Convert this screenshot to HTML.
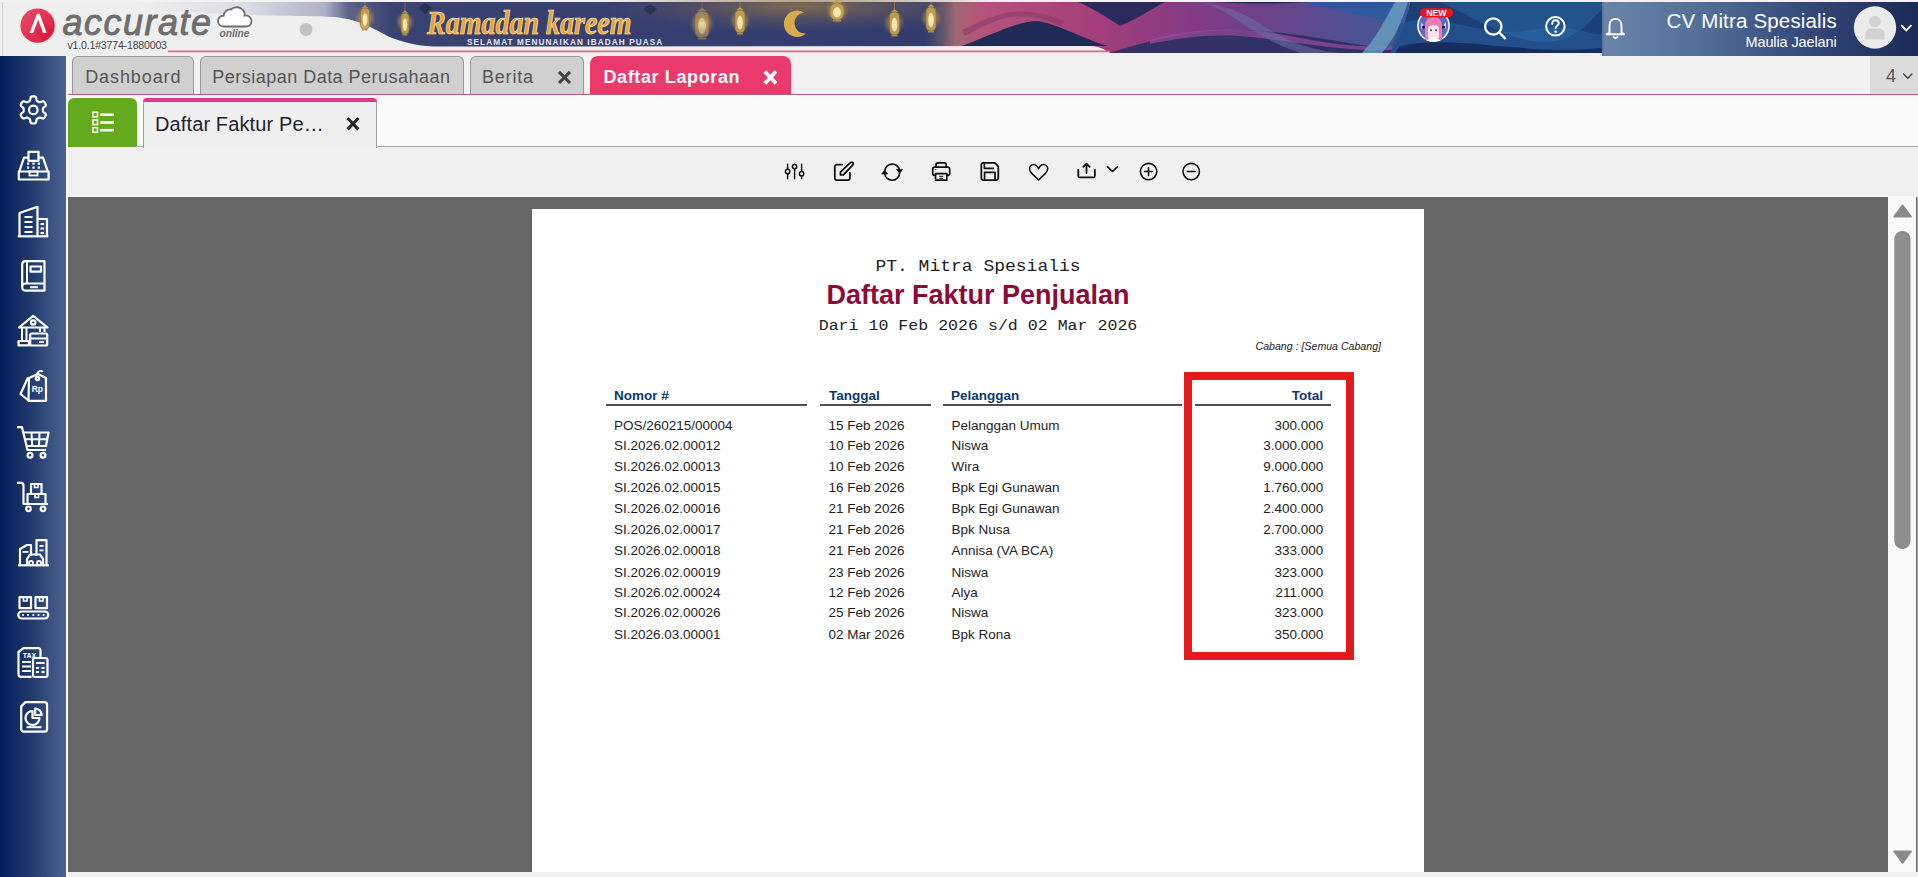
<!DOCTYPE html>
<html><head><meta charset="utf-8">
<style>
*{box-sizing:border-box;margin:0;padding:0}
html,body{width:1918px;height:877px;overflow:hidden;background:#f0f0f0;font-family:"Liberation Sans",sans-serif;position:relative}
.abs{position:absolute}
#hdr{left:0;top:0;width:1918px;height:56px;background:#eeeeee;overflow:hidden}
#side{left:0;top:56px;width:66px;height:821px;background:linear-gradient(90deg,#031e5c 0%,#1c3569 40%,#4b6492 100%)}
#gap{left:66px;top:56px;width:2px;height:821px;background:#fafafa}
#tabbar{left:68px;top:56px;width:1850px;height:38px;background:#f0f0f0}
.tab{position:absolute;top:56px;height:38px;border:1px solid #9a9a9a;border-bottom:none;border-radius:6px 6px 0 0;background:#d0d0d0;color:#555;font-size:19px;white-space:nowrap}
.tab span{position:absolute;top:8px;line-height:22px}
.tab .x{font-weight:bold}
#pinkline{left:68px;top:94px;width:1850px;height:1px;background:#b85a7e}
#panel{left:68px;top:95px;width:1850px;height:52px;background:#fafafa}
#toolbar{left:68px;top:147px;width:1850px;height:50px;background:#f0f0f0}
#viewer{left:68px;top:197px;width:1820px;height:675px;background:#666666}
#scroll{left:1888px;top:197px;width:28px;height:675px;background:#fafafa}
#page{left:532px;top:209px;width:892px;height:663px;background:#ffffff}
.rep{position:absolute;white-space:nowrap;line-height:1}
.row{position:absolute;white-space:nowrap;font-size:13.5px;color:#1e1e1e;line-height:1}
.hd{position:absolute;white-space:nowrap;font-size:13.5px;color:#0b3a6c;font-weight:bold;line-height:1}
.ul{position:absolute;height:2px;background:#505050;top:404px}
.sico{position:absolute;left:15px;width:36px;height:36px}
.tico{position:absolute;top:160px}
</style></head>
<body>
<div id="hdr" class="abs">
<svg width="1918" height="56" viewBox="0 0 1918 56" style="position:absolute;left:0;top:0">
<defs>
<linearGradient id="navy" x1="0" x2="0" y1="0" y2="1">
<stop offset="0" stop-color="#3a3f6a"/>
<stop offset="1" stop-color="#2a3466"/>
</linearGradient>
<linearGradient id="lav" x1="0" x2="1" y1="0" y2="0">
<stop offset="0" stop-color="#efeff1" stop-opacity="0"/>
<stop offset="0.5" stop-color="#d0d1db"/>
<stop offset="1" stop-color="#8e91ab"/>
</linearGradient>
<linearGradient id="goldtop" x1="0" x2="0" y1="0" y2="1">
<stop offset="0" stop-color="#8a6a3a" stop-opacity="0.75"/>
<stop offset="0.6" stop-color="#4a3d5a" stop-opacity="0.3"/>
<stop offset="1" stop-color="#2a3060" stop-opacity="0"/>
</linearGradient>
<linearGradient id="pinkr" x1="0" x2="1" y1="0" y2="1">
<stop offset="0" stop-color="#d05a78"/>
<stop offset="1" stop-color="#9a3a72"/>
</linearGradient>
<linearGradient id="purpr" x1="0" x2="1" y1="0" y2="0">
<stop offset="0" stop-color="#b04a8e"/>
<stop offset="1" stop-color="#5a4a86"/>
</linearGradient>
<linearGradient id="rpan" x1="0" x2="1" y1="0" y2="0">
<stop offset="0" stop-color="#6c86a9"/>
<stop offset="0.35" stop-color="#4f6a94"/>
<stop offset="0.7" stop-color="#2f4574"/>
<stop offset="1" stop-color="#1b2b58"/>
</linearGradient>
<radialGradient id="goldglow"><stop offset="0" stop-color="#9a7a4a" stop-opacity="0.75"/><stop offset="1" stop-color="#6a5a5a" stop-opacity="0"/></radialGradient>
<radialGradient id="glow"><stop offset="0" stop-color="#f0d080" stop-opacity="0.9"/><stop offset="1" stop-color="#c09040" stop-opacity="0"/></radialGradient>
</defs>
<rect x="0" y="0" width="1918" height="2" fill="#f4f2f2"/>
<rect x="0" y="2" width="1918" height="54" fill="#efefef"/>
<rect x="2" y="2" width="1" height="54" fill="#d0d0d0"/>

<linearGradient id="ban" x1="140" x2="1110" y1="0" y2="0" gradientUnits="userSpaceOnUse">
<stop offset="0" stop-color="#efefef"/>
<stop offset="0.11" stop-color="#dcdde5"/>
<stop offset="0.19" stop-color="#b0b2c6"/>
<stop offset="0.215" stop-color="#5e6488"/>
<stop offset="0.26" stop-color="#3a4272"/>
<stop offset="1" stop-color="#2e3a6c"/>
</linearGradient>
<path d="M140 2 L1110 2 L1110 46 L440 46.5 C422 46.5 408 44 392 38 C375 30 362 20 335 17 C300 15 250 18 140 8 Z" fill="url(#ban)"/>
<ellipse cx="800" cy="6" rx="200" ry="26" fill="url(#goldglow)"/>
<linearGradient id="wbase" x1="960" x2="1410" y1="0" y2="0" gradientUnits="userSpaceOnUse">
<stop offset="0" stop-color="#b8577a"/><stop offset="0.3" stop-color="#a43e7a"/><stop offset="0.55" stop-color="#7e3a86"/><stop offset="0.8" stop-color="#5a4a8e"/><stop offset="1" stop-color="#3a5a9a"/></linearGradient>
<path d="M955 2 L1410 2 L1400 53 L1110 53 C1105 50 1100 46 1090 46 L955 46 Z" fill="url(#wbase)"/>
<linearGradient id="blend" x1="0" x2="1" y1="0" y2="0"><stop offset="0" stop-color="#6a5a6a" stop-opacity="0"/><stop offset="0.5" stop-color="#9a6a70"/><stop offset="1" stop-color="#b8577a" stop-opacity="0"/></linearGradient>
<rect x="925" y="2" width="60" height="44" fill="url(#blend)"/>
<path d="M962 46 C985 38 1015 22 1035 21 C1055 22 1080 38 1108 46 Z" fill="#1f2a56"/>
<path d="M962 30 C975 24 990 16 1010 12 C1030 10 1050 14 1065 22 L1060 26 C1045 18 1030 15 1010 17 C995 20 980 28 965 36 Z" fill="#8a3a6a" opacity="0.6"/>
<path d="M1078 2 L1165 2 C1150 10 1135 20 1120 26 C1105 16 1092 8 1078 2 Z" fill="#2a2a5c"/>
<path d="M1110 53 C1150 40 1190 30 1240 30 C1290 30 1340 44 1400 50 L1400 53 Z" fill="#2a2f62" opacity="0.9"/>
<path d="M1150 40 C1190 28 1240 26 1290 36 C1330 44 1360 48 1395 46 L1395 50 C1340 52 1290 40 1240 36 C1200 34 1170 40 1150 44 Z" fill="#9a4a9a" opacity="0.7"/>
<path d="M1200 2 C1230 6 1250 16 1270 30 C1290 42 1310 50 1340 53 L1300 53 C1280 46 1260 36 1240 22 C1225 12 1215 6 1200 2 Z" fill="#6a6aa0" opacity="0.6"/>
<path d="M1300 2 L1400 2 L1400 22 C1370 18 1335 10 1300 2 Z" fill="#2a5a9e" opacity="0.85"/>
<path d="M1215 2 C1250 4 1280 4 1310 2 Z" fill="#1f2a56"/>
<path d="M1395 2 C1385 20 1375 40 1362 53 L1382 53 C1397 35 1402 20 1408 2 Z" fill="#6aa0c0" opacity="0.8"/>
<path d="M1404 2 L1602 2 L1602 53 L1390 53 C1400 40 1405 25 1410 2 Z" fill="#1d3f78"/>
<path d="M1400 24 C1440 8 1480 40 1530 30 C1570 22 1590 36 1602 34 L1602 53 L1390 53 Z" fill="#23528f" opacity="0.85"/>
<path d="M1440 2 C1480 20 1520 50 1560 40 C1580 35 1590 20 1602 10 L1602 2 Z" fill="#2b7ab3" opacity="0.35"/>
<path d="M1400 46 C1460 34 1520 56 1602 48 L1602 53 L1395 53 Z" fill="#172d5c"/>
<g fill="url(#glow)">
<circle cx="365" cy="18" r="11"/><circle cx="405" cy="22" r="10"/>
<circle cx="702" cy="24" r="13"/><circle cx="740" cy="21" r="11"/>
<circle cx="837" cy="11" r="12"/><circle cx="894" cy="23" r="11"/><circle cx="931" cy="18" r="11"/>
</g>
<g opacity="0.9"><path d="M365 2 V5" stroke="#b8954a" stroke-width="0.6"/>
<path d="M361.9 8.0 L365 5.0 L368.1 8.0 Z" fill="#c9a14e"/>
<rect x="360.5" y="8.0" width="9" height="21" rx="4.1" fill="#c9a24e" stroke="#8a6a30" stroke-width="0.7"/>
<ellipse cx="365" cy="19.6" rx="2.5" ry="6.3" fill="#fff0b8"/>
<rect x="362.3" y="29.0" width="5.4" height="1.5" fill="#b8954a"/></g>
<g opacity="0.9"><path d="M405 2 V10" stroke="#b8954a" stroke-width="0.6"/>
<path d="M402.2 13.0 L405 10.0 L407.8 13.0 Z" fill="#c9a14e"/>
<rect x="401.0" y="13.0" width="8" height="21" rx="3.6" fill="#c9a24e" stroke="#8a6a30" stroke-width="0.7"/>
<ellipse cx="405" cy="24.6" rx="2.2" ry="6.3" fill="#fff0b8"/>
<rect x="402.6" y="34.0" width="4.8" height="1.5" fill="#b8954a"/></g>
<g opacity="0.55"><path d="M702 2 V8" stroke="#b8954a" stroke-width="0.6"/>
<path d="M697.1 11.0 L702 8.0 L706.9 11.0 Z" fill="#c9a14e"/>
<rect x="695.0" y="11.0" width="14" height="27" rx="6.4" fill="#c9a24e" stroke="#8a6a30" stroke-width="0.7"/>
<ellipse cx="702" cy="25.9" rx="3.9" ry="8.1" fill="#fff0b8"/>
<rect x="697.8" y="38.0" width="8.4" height="1.5" fill="#b8954a"/></g>
<g opacity="0.9"><path d="M740 2 V7" stroke="#b8954a" stroke-width="0.6"/>
<path d="M736.5 10.0 L740 7.0 L743.5 10.0 Z" fill="#c9a14e"/>
<rect x="735.0" y="10.0" width="10" height="23" rx="4.5" fill="#c9a24e" stroke="#8a6a30" stroke-width="0.7"/>
<ellipse cx="740" cy="22.6" rx="2.8" ry="6.9" fill="#fff0b8"/>
<rect x="737.0" y="33.0" width="6.0" height="1.5" fill="#b8954a"/></g>
<g opacity="0.9"><path d="M837 2 V0" stroke="#b8954a" stroke-width="0.6"/>
<path d="M832.1 3.0 L837 0.0 L841.9 3.0 Z" fill="#c9a14e"/>
<rect x="830.0" y="3.0" width="14" height="17" rx="6.4" fill="#c9a24e" stroke="#8a6a30" stroke-width="0.7"/>
<ellipse cx="837" cy="12.4" rx="3.9" ry="5.1" fill="#fff0b8"/>
<rect x="832.8" y="20.0" width="8.4" height="1.5" fill="#b8954a"/></g>
<g opacity="0.9"><path d="M894.5 2 V9" stroke="#b8954a" stroke-width="0.6"/>
<path d="M891.0 12.0 L894.5 9.0 L898.0 12.0 Z" fill="#c9a14e"/>
<rect x="889.5" y="12.0" width="10" height="23" rx="4.5" fill="#c9a24e" stroke="#8a6a30" stroke-width="0.7"/>
<ellipse cx="894.5" cy="24.6" rx="2.8" ry="6.9" fill="#fff0b8"/>
<rect x="891.5" y="35.0" width="6.0" height="1.5" fill="#b8954a"/></g>
<g opacity="0.9"><path d="M931 2 V4" stroke="#b8954a" stroke-width="0.6"/>
<path d="M927.5 7.0 L931 4.0 L934.5 7.0 Z" fill="#c9a14e"/>
<rect x="926.0" y="7.0" width="10" height="24" rx="4.5" fill="#c9a24e" stroke="#8a6a30" stroke-width="0.7"/>
<ellipse cx="931" cy="20.2" rx="2.8" ry="7.2" fill="#fff0b8"/>
<rect x="928.0" y="31.0" width="6.0" height="1.5" fill="#b8954a"/></g>

<path d="M806 33.5 A13.2 13.2 0 1 1 804 12.5 A10.2 10.2 0 1 0 806 33.5 Z" fill="#d9ab4a"/>
<g fill="#16223f" opacity="0.55"><path d="M425 3 l7 5 -7 6 -7 -6z"/><path d="M650 4 l7 5 -7 6 -7 -6z"/></g>
<path d="M168 50.6 L1110 50.6 L1110 52.2 L168 52.2 Z" fill="#e26b83"/>
<circle cx="306" cy="29.5" r="6.5" fill="#c2c2c2"/>
<rect x="1602" y="2" width="316" height="54" fill="url(#rpan)"/>
<rect x="1602" y="2" width="2" height="54" fill="#5d7ba6"/>
</svg>

<!-- logo -->
<svg class="abs" style="left:0;top:0" width="60" height="56" viewBox="0 0 60 56">
<defs><linearGradient id="lg" x1="0" y1="0" x2="1" y2="1"><stop offset="0" stop-color="#ee4a6a"/><stop offset="1" stop-color="#dc1a3a"/></linearGradient></defs>
<circle cx="37.6" cy="25.6" r="17.2" fill="url(#lg)"/>
<path d="M44 20 L55 31 L45 41 L36 33 Z" fill="#d8142f" opacity="0.35"/>
<path d="M29.6 33 L36.5 14.4 C36.8 13.7 37.4 13.4 38.2 13.4 C39 13.4 39.6 13.7 39.9 14.4 L46.6 33 L43 33 L38.2 19.6 L33.2 33 Z" fill="#fff"/>
</svg>
<div class="abs" style="left:62.5px;top:2.5px;font-size:36px;line-height:40px;font-style:italic;color:#6e6e6e;letter-spacing:1.5px;-webkit-text-stroke:0.9px #6e6e6e;white-space:nowrap">accurate</div>
<svg class="abs" style="left:216px;top:5px" width="38" height="24" viewBox="0 0 38 24">
<path d="M8 21.5 C3.5 21.5 2 18.5 2 16 C2 13 4.5 10.5 7.5 10.8 C8 6.5 11.5 4 15 4.5 C17.5 2 22 1.5 25 3.5 C28.5 5.5 29 9 28.5 10.5 C32.5 10 35.5 13 35.5 16 C35.5 19.5 33 21.5 30 21.5 Z" fill="#fff" stroke="#6e6e6e" stroke-width="1.8"/>
</svg>
<div class="abs" style="left:219.5px;top:27.5px;font-size:10.2px;line-height:11px;font-weight:bold;font-style:italic;color:#6e6e6e;white-space:nowrap">online</div>
<div class="abs" style="left:67.5px;top:40px;font-size:10.6px;line-height:11px;color:#444;letter-spacing:-0.2px;white-space:nowrap">v1.0.1#3774-1880003</div>
<!-- ramadan -->
<div class="abs" style="left:427px;top:3px;font-family:'Liberation Serif',serif;font-size:28px;line-height:34px;font-weight:bold;font-style:italic;color:#e8a03a;white-space:nowrap;transform:scaleY(1.2);transform-origin:0 0;-webkit-text-stroke:0.6px #f8e8c8;text-shadow:0 1px 1px #6a4a1a">Ramadan kareem</div>
<div class="abs" style="left:467px;top:37.5px;font-size:8.2px;line-height:9px;font-weight:bold;color:#e6e9f5;letter-spacing:1.1px;white-space:nowrap">SELAMAT MENUNAIKAN IBADAH PUASA</div>

<!-- right header -->
<svg class="abs" style="left:1400px;top:0" width="518" height="56" viewBox="0 0 518 56">
<circle cx="33.5" cy="25.8" r="16.3" fill="#fff"/>
<circle cx="33.5" cy="25.8" r="14.8" fill="#5b68c8"/>
<path d="M21 22 L24.5 27 L21.5 29 Z M46 22 L42.5 27 L45.5 29 Z" fill="#e8ecff"/>
<circle cx="23.5" cy="27" r="1.6" fill="#1a1a4a"/><circle cx="43.5" cy="27" r="1.6" fill="#1a1a4a"/>
<path d="M25 40 L25 26 C25 20 28.5 17 33.5 17 C38.5 17 42 20 42 26 L42 40 Z" fill="#f27ab0"/>
<path d="M28 38 L28 29 C28 26 30.5 25 33.5 25 C36.5 25 39 26 39 29 L39 38 Z" fill="#fde3ea"/>
<circle cx="31" cy="30.3" r="1" fill="#4a3050"/><circle cx="36" cy="30.3" r="1" fill="#4a3050"/>
<path d="M27 41 C29 36 38 36 40 41 Z" fill="#ffffff"/>
<rect x="20" y="8.3" width="33" height="9" rx="4.5" fill="#ee121a"/>
<text x="36.4" y="16.1" font-family="Liberation Sans" font-weight="bold" font-size="8.8" fill="#fff" text-anchor="middle">NEW</text>
<circle cx="93.3" cy="26.5" r="8.2" fill="none" stroke="#fff" stroke-width="2.3"/>
<path d="M99.2 32.4 L105 38.3" stroke="#fff" stroke-width="2.4" stroke-linecap="round"/>
<circle cx="155.4" cy="26.3" r="9.3" fill="none" stroke="#fff" stroke-width="2"/>
<path d="M152.2 24 C152.2 21.5 153.8 20.3 155.5 20.3 C157.4 20.3 158.8 21.6 158.8 23.3 C158.8 25.5 155.6 25.6 155.6 28.2" fill="none" stroke="#fff" stroke-width="1.9" stroke-linecap="round"/>
<circle cx="155.6" cy="31.7" r="1.2" fill="#fff"/>
<rect x="202" y="2" width="316" height="54" fill="url(#rpan2)"/>
<defs><linearGradient id="rpan2" x1="0" x2="1" y1="0" y2="0">
<stop offset="0" stop-color="#6a85a9"/><stop offset="0.3" stop-color="#54709a"/><stop offset="0.65" stop-color="#34497a"/><stop offset="1" stop-color="#1b2a56"/></linearGradient></defs>
<rect x="202" y="2" width="2" height="54" fill="#5b79a4"/>
<path d="M209.5 32.6 L209.5 25.5 C209.5 21.3 212.2 18.9 215.5 18.9 C218.8 18.9 221.5 21.3 221.5 25.5 L221.5 32.6 L224.2 34.2 L206.8 34.2 Z" fill="none" stroke="#fff" stroke-width="1.9" stroke-linejoin="round"/>
<path d="M213 36.6 L215.5 38.2 L218 36.6" fill="none" stroke="#fff" stroke-width="1.7"/>
<circle cx="475" cy="27.5" r="21.2" fill="#ebebeb"/>
<circle cx="475" cy="21.5" r="5.8" fill="#d3d3d3"/>
<path d="M465.5 39.5 L465.5 34 C465.5 30.5 468 28.5 471 28.5 L479 28.5 C482 28.5 484.5 30.5 484.5 34 L484.5 39.5 Z" fill="#d3d3d3"/>
<path d="M501.2 25.2 L506.3 30.3 L511.4 25.2" fill="none" stroke="#fff" stroke-width="1.9"/>
</svg>
<div class="abs" style="right:81px;top:9.9px;font-size:20.5px;line-height:22px;color:#fff;letter-spacing:0.17px;white-space:nowrap">CV Mitra Spesialis</div>
<div class="abs" style="right:81.5px;top:34.6px;font-size:14.5px;line-height:15px;color:#fff;letter-spacing:-0.12px;white-space:nowrap">Maulia Jaelani</div>
</div>
<div id="side" class="abs"></div>
<svg class="abs" style="left:0;top:0" width="66" height="877" viewBox="0 0 66 877"><path d="M42.90 109.90 L42.90 110.07 L42.90 110.24 L42.90 110.40 L42.90 110.57 L42.90 110.74 L42.91 110.91 L42.93 111.08 L42.96 111.26 L43.02 111.44 L43.11 111.63 L43.25 111.83 L43.46 112.06 L43.75 112.31 L44.11 112.59 L44.50 112.90 L44.90 113.23 L45.23 113.55 L45.49 113.86 L45.65 114.15 L45.74 114.43 L45.78 114.69 L45.77 114.94 L45.73 115.17 L45.67 115.41 L45.59 115.63 L45.50 115.85 L45.41 116.07 L45.30 116.28 L45.19 116.49 L45.08 116.70 L44.96 116.90 L44.83 117.10 L44.70 117.30 L44.56 117.49 L44.41 117.68 L44.25 117.86 L44.08 118.02 L43.89 118.18 L43.68 118.31 L43.44 118.41 L43.16 118.47 L42.82 118.47 L42.43 118.41 L41.98 118.28 L41.50 118.10 L41.04 117.91 L40.61 117.74 L40.25 117.62 L39.95 117.55 L39.70 117.53 L39.49 117.55 L39.31 117.59 L39.14 117.65 L38.98 117.72 L38.83 117.80 L38.68 117.88 L38.53 117.96 L38.39 118.05 L38.24 118.13 L38.10 118.21 L37.95 118.30 L37.81 118.38 L37.66 118.46 L37.52 118.55 L37.37 118.64 L37.23 118.73 L37.09 118.83 L36.95 118.94 L36.83 119.08 L36.71 119.26 L36.60 119.48 L36.51 119.78 L36.44 120.15 L36.37 120.61 L36.30 121.10 L36.22 121.60 L36.11 122.06 L35.96 122.43 L35.79 122.72 L35.60 122.94 L35.39 123.10 L35.17 123.21 L34.95 123.30 L34.71 123.36 L34.48 123.41 L34.25 123.44 L34.01 123.47 L33.77 123.49 L33.54 123.50 L33.30 123.50 L33.06 123.50 L32.83 123.49 L32.59 123.47 L32.35 123.44 L32.12 123.41 L31.89 123.36 L31.65 123.30 L31.43 123.21 L31.21 123.10 L31.00 122.94 L30.81 122.72 L30.64 122.43 L30.49 122.06 L30.38 121.60 L30.30 121.10 L30.23 120.61 L30.16 120.15 L30.09 119.78 L30.00 119.48 L29.89 119.26 L29.77 119.08 L29.65 118.94 L29.51 118.83 L29.37 118.73 L29.23 118.64 L29.08 118.55 L28.94 118.46 L28.79 118.38 L28.65 118.30 L28.50 118.21 L28.36 118.13 L28.21 118.05 L28.07 117.96 L27.92 117.88 L27.77 117.80 L27.62 117.72 L27.46 117.65 L27.29 117.59 L27.11 117.55 L26.90 117.53 L26.65 117.55 L26.35 117.62 L25.99 117.74 L25.56 117.91 L25.10 118.10 L24.62 118.28 L24.17 118.41 L23.78 118.47 L23.44 118.47 L23.16 118.41 L22.92 118.31 L22.71 118.18 L22.52 118.02 L22.35 117.86 L22.19 117.68 L22.04 117.49 L21.90 117.30 L21.77 117.10 L21.64 116.90 L21.52 116.70 L21.41 116.49 L21.30 116.28 L21.19 116.07 L21.10 115.85 L21.01 115.63 L20.93 115.41 L20.87 115.17 L20.83 114.94 L20.82 114.69 L20.86 114.43 L20.95 114.15 L21.11 113.86 L21.37 113.55 L21.70 113.23 L22.10 112.90 L22.49 112.59 L22.85 112.31 L23.14 112.06 L23.35 111.83 L23.49 111.63 L23.58 111.44 L23.64 111.26 L23.67 111.08 L23.69 110.91 L23.70 110.74 L23.70 110.57 L23.70 110.40 L23.70 110.24 L23.70 110.07 L23.70 109.90 L23.70 109.73 L23.70 109.56 L23.70 109.40 L23.70 109.23 L23.70 109.06 L23.69 108.89 L23.67 108.72 L23.64 108.54 L23.58 108.36 L23.49 108.17 L23.35 107.97 L23.14 107.74 L22.85 107.49 L22.49 107.21 L22.10 106.90 L21.70 106.57 L21.37 106.25 L21.11 105.94 L20.95 105.65 L20.86 105.37 L20.82 105.11 L20.83 104.86 L20.87 104.63 L20.93 104.39 L21.01 104.17 L21.10 103.95 L21.19 103.73 L21.30 103.52 L21.41 103.31 L21.52 103.10 L21.64 102.90 L21.77 102.70 L21.90 102.50 L22.04 102.31 L22.19 102.12 L22.35 101.94 L22.52 101.78 L22.71 101.62 L22.92 101.49 L23.16 101.39 L23.44 101.33 L23.78 101.33 L24.17 101.39 L24.62 101.52 L25.10 101.70 L25.56 101.89 L25.99 102.06 L26.35 102.18 L26.65 102.25 L26.90 102.27 L27.11 102.25 L27.29 102.21 L27.46 102.15 L27.62 102.08 L27.77 102.00 L27.92 101.92 L28.07 101.84 L28.21 101.75 L28.36 101.67 L28.50 101.59 L28.65 101.50 L28.79 101.42 L28.94 101.34 L29.08 101.25 L29.23 101.16 L29.37 101.07 L29.51 100.97 L29.65 100.86 L29.77 100.72 L29.89 100.54 L30.00 100.32 L30.09 100.02 L30.16 99.65 L30.23 99.19 L30.30 98.70 L30.38 98.20 L30.49 97.74 L30.64 97.37 L30.81 97.08 L31.00 96.86 L31.21 96.70 L31.43 96.59 L31.65 96.50 L31.89 96.44 L32.12 96.39 L32.35 96.36 L32.59 96.33 L32.83 96.31 L33.06 96.30 L33.30 96.30 L33.54 96.30 L33.77 96.31 L34.01 96.33 L34.25 96.36 L34.48 96.39 L34.71 96.44 L34.95 96.50 L35.17 96.59 L35.39 96.70 L35.60 96.86 L35.79 97.08 L35.96 97.37 L36.11 97.74 L36.22 98.20 L36.30 98.70 L36.37 99.19 L36.44 99.65 L36.51 100.02 L36.60 100.32 L36.71 100.54 L36.83 100.72 L36.95 100.86 L37.09 100.97 L37.23 101.07 L37.37 101.16 L37.52 101.25 L37.66 101.34 L37.81 101.42 L37.95 101.50 L38.10 101.59 L38.24 101.67 L38.39 101.75 L38.53 101.84 L38.68 101.92 L38.83 102.00 L38.98 102.08 L39.14 102.15 L39.31 102.21 L39.49 102.25 L39.70 102.27 L39.95 102.25 L40.25 102.18 L40.61 102.06 L41.04 101.89 L41.50 101.70 L41.98 101.52 L42.43 101.39 L42.82 101.33 L43.16 101.33 L43.44 101.39 L43.68 101.49 L43.89 101.62 L44.08 101.78 L44.25 101.94 L44.41 102.12 L44.56 102.31 L44.70 102.50 L44.83 102.70 L44.96 102.90 L45.08 103.10 L45.19 103.31 L45.30 103.52 L45.41 103.73 L45.50 103.95 L45.59 104.17 L45.67 104.39 L45.73 104.63 L45.77 104.86 L45.78 105.11 L45.74 105.37 L45.65 105.65 L45.49 105.94 L45.23 106.25 L44.90 106.57 L44.50 106.90 L44.11 107.21 L43.75 107.49 L43.46 107.74 L43.25 107.97 L43.11 108.17 L43.02 108.36 L42.96 108.54 L42.93 108.72 L42.91 108.89 L42.90 109.06 L42.90 109.23 L42.90 109.40 L42.90 109.56 L42.90 109.73 Z" fill="none" stroke="#fff" stroke-width="2.2" stroke-linejoin="round"/><circle cx="33.3" cy="109.9" r="4.3" fill="none" stroke="#fff" stroke-width="2.2"/>
<rect x="28.5" y="151.8" width="10" height="9" fill="none" stroke="#fff" stroke-width="2.2" stroke-linejoin="round"/>
<path d="M28.5 157.6 L24 157.6 L19.3 171.5 M38.5 157.6 L43 157.6 L47.8 171.5" fill="none" stroke="#fff" stroke-width="2.2" stroke-linejoin="round"/>
<rect x="18.8" y="171.5" width="29.8" height="8" fill="none" stroke="#fff" stroke-width="2.2" stroke-linejoin="round"/>
<rect x="29.5" y="171.5" width="8" height="4" fill="none" stroke="#fff" stroke-width="1.8"/>
<g fill="#fff"><rect x="27" y="162.5" width="2.2" height="2.2"/><rect x="32.4" y="162.5" width="2.2" height="2.2"/><rect x="37.8" y="162.5" width="2.2" height="2.2"/>
<rect x="27" y="166.5" width="2.2" height="2.2"/><rect x="32.4" y="166.5" width="2.2" height="2.2"/><rect x="37.8" y="166.5" width="2.2" height="2.2"/></g>

<path d="M19.5 236.3 L19.5 213 L37.5 206.8 L37.5 236.3" fill="none" stroke="#fff" stroke-width="2.2" stroke-linejoin="round"/>
<path d="M37.5 219 L47 219 L47 236.3" fill="none" stroke="#fff" stroke-width="2.2" stroke-linejoin="round"/>
<path d="M17.7 236.3 L48.3 236.3" stroke="#fff" stroke-width="2.2"/>
<g fill="#fff"><rect x="24.5" y="216" width="8" height="2"/><rect x="24.5" y="221" width="8" height="2"/><rect x="24.5" y="226" width="8" height="2"/><rect x="24.5" y="231" width="8" height="2"/>
<rect x="40.5" y="223" width="3.5" height="2"/><rect x="40.5" y="227.5" width="3.5" height="2"/><rect x="40.5" y="232" width="3.5" height="2"/></g>

<path d="M22.2 287 L22.2 264.5 C22.2 262.5 23.5 261.1 25.5 261.1 L44.5 261.1 L44.5 290.7 L26 290.7 C23.5 290.7 22.2 289.2 22.2 287 C22.2 285 23.5 283.5 26 283.5 L44.5 283.5" fill="none" stroke="#fff" stroke-width="2.2" stroke-linejoin="round"/>
<path d="M27 261.5 L27 283" stroke="#fff" stroke-width="2"/>
<rect x="30.5" y="266.5" width="10.5" height="5.2" fill="none" stroke="#fff" stroke-width="2.2" stroke-linejoin="round"/>
<rect x="30" y="286.2" width="8" height="2" fill="#fff"/>

<path d="M19 327.5 L33.2 315.8 L47.5 327.5 Z" fill="none" stroke="#fff" stroke-width="2.2" stroke-linejoin="round"/>
<circle cx="33.2" cy="322.5" r="2.2" fill="none" stroke="#fff" stroke-width="2.2" stroke-linejoin="round"/>
<path d="M22 327.5 L22 341 M26.5 327.5 L26.5 341 M40 327.5 L40 332 M44.5 327.5 L44.5 332" stroke="#fff" stroke-width="2"/>
<path d="M18.5 345.3 L29 345.3 L29 341 L18.5 341 Z" fill="none" stroke="#fff" stroke-width="2.2" stroke-linejoin="round"/>
<rect x="30.2" y="333.5" width="17" height="12" rx="1.5" fill="none" stroke="#fff" stroke-width="2.2" stroke-linejoin="round"/>
<path d="M30.2 338.5 L47.2 338.5" stroke="#fff" stroke-width="2"/>
<rect x="39" y="341.2" width="5" height="1.8" fill="#fff"/>

<path d="M28 377.5 L20.5 394 L28.5 400.5" fill="none" stroke="#fff" stroke-width="2.2" stroke-linejoin="round"/>
<path d="M29 378 L38 374 L46 378 L46 400.8 L28.5 400.8 Z" fill="none" stroke="#fff" stroke-width="2.2" stroke-linejoin="round"/>
<circle cx="37.5" cy="378.5" r="1.6" fill="none" stroke="#fff" stroke-width="2.2" stroke-linejoin="round"/>
<path d="M36 376 C38 370 42 370 42.5 372" fill="none" stroke="#fff" stroke-width="1.8"/>
<text x="37.3" y="391.8" font-family="Liberation Sans" font-weight="bold" font-size="8.5" fill="#fff" text-anchor="middle">Rp</text>

<path d="M17 427.2 L22 427.2 L27.5 450 L46 450" fill="none" stroke="#fff" stroke-width="2.2" stroke-linejoin="round"/>
<path d="M23.5 432.5 L48.5 432.5 L46 446 L26.5 446" fill="none" stroke="#fff" stroke-width="2.2" stroke-linejoin="round"/>
<path d="M31.5 432.5 L32.2 446 M39.5 432.5 L39 446 M24.8 439.3 L47.3 439.3" stroke="#fff" stroke-width="2"/>
<circle cx="30" cy="455.3" r="2.4" fill="none" stroke="#fff" stroke-width="2.2" stroke-linejoin="round"/><circle cx="43" cy="455.3" r="2.4" fill="none" stroke="#fff" stroke-width="2.2" stroke-linejoin="round"/>

<path d="M17 482.8 L21 482.8 C22.5 482.8 23.5 484 23.5 485.5 L23.5 504 L48 504" fill="none" stroke="#fff" stroke-width="2.2" stroke-linejoin="round"/>
<rect x="27.5" y="494" width="18" height="10" fill="none" stroke="#fff" stroke-width="2.2" stroke-linejoin="round"/>
<rect x="31" y="484" width="10.5" height="10" fill="none" stroke="#fff" stroke-width="2.2" stroke-linejoin="round"/>
<path d="M34.5 484 L34.5 487.5 L38 487.5 L38 484 M35 494 L35 497.5 L38.5 497.5 L38.5 494" stroke="#fff" stroke-width="1.6" fill="none"/>
<circle cx="28.5" cy="508.8" r="2.3" fill="none" stroke="#fff" stroke-width="2.2" stroke-linejoin="round"/><circle cx="43" cy="508.8" r="2.3" fill="none" stroke="#fff" stroke-width="2.2" stroke-linejoin="round"/>

<path d="M18 565.3 L49 565.3" stroke="#fff" stroke-width="2.2"/>
<path d="M20 565.3 L20 549 L27 545 L31 545 L31 556" fill="none" stroke="#fff" stroke-width="2.2" stroke-linejoin="round"/>
<path d="M36.5 556 L36.5 540.2 L46.5 540.2 L46.5 565.3" fill="none" stroke="#fff" stroke-width="2.2" stroke-linejoin="round"/>
<path d="M27 564.5 L27 559 L30 554.5 L40 554.5 L43 559 L43 564.5" fill="none" stroke="#fff" stroke-width="2.2" stroke-linejoin="round"/>
<circle cx="31" cy="563" r="2" fill="#1a2f66" stroke="#fff" stroke-width="1.8"/><circle cx="39" cy="563" r="2" fill="#1a2f66" stroke="#fff" stroke-width="1.8"/>
<g fill="#fff"><rect x="22.5" y="551" width="6" height="1.8"/><rect x="39.5" y="545" width="4" height="1.8"/><rect x="39.5" y="549.5" width="4" height="1.8"/></g>

<rect x="18.3" y="611.5" width="30" height="7" rx="3.5" fill="none" stroke="#fff" stroke-width="2.2" stroke-linejoin="round"/>
<g fill="#fff"><circle cx="23" cy="615" r="1.1"/><circle cx="28" cy="615" r="1.1"/><circle cx="33.3" cy="615" r="1.1"/><circle cx="38.5" cy="615" r="1.1"/><circle cx="43.6" cy="615" r="1.1"/></g>
<rect x="19.5" y="597.2" width="11.5" height="11" fill="none" stroke="#fff" stroke-width="2.2" stroke-linejoin="round"/>
<rect x="35.5" y="597.2" width="11.5" height="11" fill="none" stroke="#fff" stroke-width="2.2" stroke-linejoin="round"/>
<path d="M23.5 597.2 L23.5 601 L27 601 L27 597.2 M39.5 597.2 L39.5 601 L43 601 L43 597.2" stroke="#fff" stroke-width="1.6" fill="none"/>

<path d="M31.5 676.8 L21 676.8 C19.5 676.8 18.5 675.8 18.5 674.3 L18.5 652 L23.5 648.2 L38 648.2 C39.5 648.2 40.5 649.2 40.5 650.7 L40.5 657" fill="none" stroke="#fff" stroke-width="2.2" stroke-linejoin="round"/>
<text x="29.5" y="657.5" font-family="Liberation Sans" font-weight="bold" font-size="7" fill="#fff" text-anchor="middle">TAX</text>
<path d="M22 662 L31 662 M22 666.5 L31 666.5 M22 671 L31 671" stroke="#fff" stroke-width="2"/>
<rect x="33" y="658" width="14.5" height="19" rx="2" fill="none" stroke="#fff" stroke-width="2.2" stroke-linejoin="round"/>
<path d="M36 663 L44.5 663" stroke="#fff" stroke-width="2"/>
<g fill="#fff"><rect x="36" y="667" width="3" height="2"/><rect x="41.5" y="667" width="3" height="2"/><rect x="36" y="671" width="3" height="2"/><rect x="41.5" y="671" width="3" height="2"/></g>

<path d="M25.5 702.1 L44.5 702.1 C46 702.1 47.1 703.2 47.1 704.7 L47.1 729 C47.1 730.5 46 731.6 44.5 731.6 L23.8 731.6 C22.3 731.6 21.2 730.5 21.2 729 L21.2 706.4 Z" fill="none" stroke="#fff" stroke-width="2.2" stroke-linejoin="round"/>
<path d="M32.5 711 A7 7 0 1 0 39.5 718 L32.5 718 Z" fill="none" stroke="#fff" stroke-width="2.2" stroke-linejoin="round"/>
<path d="M35.2 708.5 A6.5 6.5 0 0 1 41.7 715 L35.2 715 Z" fill="none" stroke="#fff" stroke-width="2.2" stroke-linejoin="round"/>
<path d="M26.5 727.2 L41.5 727.2" stroke="#fff" stroke-width="2"/>
</svg>
<div id="gap" class="abs"></div>
<div id="tabbar" class="abs"></div>
<div id="pinkline" class="abs"></div>
<div id="panel" class="abs"></div>
<div id="toolbar" class="abs"></div>

<!-- tabs -->
<div class="abs" style="left:68px;top:56px;width:1802px;height:38px;background:#f2f2f2"></div>
<div class="tab" style="left:72px;width:122px"><span style="left:12.2px;top:10.6px;font-size:18px;line-height:18px;letter-spacing:0.9px">Dashboard</span></div>
<div class="tab" style="left:200px;width:264px"><span style="left:11.2px;top:10.6px;font-size:18px;line-height:18px;letter-spacing:0.49px">Persiapan Data Perusahaan</span></div>
<div class="tab" style="left:470px;width:114px"><span style="left:11px;top:10.6px;font-size:18px;line-height:18px;letter-spacing:0.8px">Berita</span>
<svg class="abs" style="left:86px;top:12.5px" width="15" height="15" viewBox="0 0 15 15"><path d="M2 1.8 L13 13 M13 1.8 L2 13" stroke="#444" stroke-width="3.2"/></svg></div>
<div class="tab" style="left:590px;width:201px;background:#ea3a6b;border:none;border-radius:8px 8px 0 0"><span style="left:13.5px;top:11.8px;font-size:18px;line-height:18px;letter-spacing:0.62px;color:#fff;font-weight:bold">Daftar Laporan</span>
<svg class="abs" style="left:172.6px;top:13.8px" width="15" height="15" viewBox="0 0 15 15"><path d="M1.8 1.5 L13 13.6 M13 1.5 L1.8 13.6" stroke="#fff" stroke-width="3.7"/></svg></div>
<div class="abs" style="left:1870px;top:56px;width:48px;height:38px;background:#dcdcdc"></div>
<div class="abs" style="left:1886px;top:67.4px;font-size:18px;line-height:18px;color:#555">4</div>
<svg class="abs" style="left:1901.5px;top:72px" width="12" height="8" viewBox="0 0 12 8"><path d="M1.2 1.5 L5.8 6.3 L10.4 1.5" stroke="#444" stroke-width="1.4" fill="none"/></svg>
<!-- sub tabs -->
<div class="abs" style="left:68px;top:98px;width:69px;height:49px;background:#63aa1c;border-radius:6px 6px 0 0"></div>
<svg class="abs" style="left:90px;top:110px" width="26" height="26" viewBox="0 0 26 26">
<rect x="2.9" y="2.2" width="4.6" height="4.6" fill="none" stroke="#fff" stroke-width="1.5"/>
<rect x="2.9" y="10" width="4.6" height="4.6" fill="none" stroke="#fff" stroke-width="1.5"/>
<rect x="2.9" y="17.7" width="4.6" height="4.6" fill="none" stroke="#fff" stroke-width="1.5"/>
<rect x="10.2" y="3.4" width="13.6" height="2.6" fill="#fff"/>
<rect x="10.2" y="11.2" width="13.6" height="2.6" fill="#fff"/>
<rect x="10.2" y="18.9" width="13.6" height="2.6" fill="#fff"/>
</svg>
<div class="abs" style="left:142.5px;top:98px;width:234.5px;height:50px;background:#efefef;border-left:1px solid #a0a0a0;border-right:1px solid #a0a0a0;border-radius:6px 6px 0 0;"></div>
<div class="abs" style="left:136px;top:146px;width:7px;height:1px;background:#a8a8a8"></div>
<div class="abs" style="left:68px;top:196px;width:1850px;height:1px;background:#fafafa"></div>
<div class="abs" style="left:142.5px;top:98px;width:234.5px;height:4px;background:#e2398f;border-radius:6px 6px 0 0"></div>
<div class="abs" style="left:377px;top:146px;width:1541px;height:1px;background:#a8a8a8"></div>
<div class="abs" style="left:155px;top:114px;font-size:20px;line-height:20px;color:#1e2430;letter-spacing:0.12px;white-space:nowrap">Daftar Faktur Pe…</div>
<svg class="abs" style="left:346px;top:117px" width="14" height="14" viewBox="0 0 14 14"><path d="M1.6 1.3 L12.4 12.4 M12.4 1.3 L1.6 12.4" stroke="#222" stroke-width="3"/></svg>
<div id="viewer" class="abs"></div>
<div id="scroll" class="abs"></div>
<svg class="abs" style="left:0;top:0" width="1918" height="200" viewBox="0 0 1918 200">
<g fill="none" stroke="#111" stroke-linecap="round" stroke-linejoin="round" stroke-width="1.45">
<path d="M787.6 164.2 V169.2 M787.6 173.8 V178.8 M794.6 164.2 V164.5 M794.6 168.8 V178.8 M801.6 164.2 V171.4 M801.6 176 V178.8"/>
<circle cx="787.6" cy="171.5" r="2.2"/><circle cx="794.6" cy="166.6" r="2.2"/><circle cx="801.6" cy="173.7" r="2.2"/>
</g>
<g fill="none" stroke="#111" stroke-linecap="round" stroke-linejoin="round" stroke-width="1.75">
<path d="M842.3 164.6 H837 C835.6 164.6 834.8 165.5 834.8 166.8 V177.9 C834.8 179.2 835.6 180 837 180 H847.8 C849.1 180 849.9 179.2 849.9 177.9 V172.5"/>
<path d="M840.4 175 L840.6 171.8 L850.2 162.8 C851 162 852 162 852.7 162.7 C853.4 163.4 853.4 164.4 852.6 165.1 L843.4 174.8 Z"/>
</g>
<g fill="none" stroke="#111" stroke-linecap="round" stroke-linejoin="round" stroke-width="1.7">
<path d="M884.7 171.2 A7.5 7.5 0 0 1 899.6 170.4"/>
<path d="M899.6 172.5 A7.5 7.5 0 0 1 884.6 173"/>
</g>
<path d="M896.6 169.4 L902.4 169.4 L899.6 173.3 Z" fill="#111" stroke="#111" stroke-width="0.8" stroke-linejoin="round"/>
<path d="M881.8 174 L887.6 174 L884.6 170.2 Z" fill="#111" stroke="#111" stroke-width="0.8" stroke-linejoin="round"/>
<g fill="none" stroke="#111" stroke-linecap="round" stroke-linejoin="round" stroke-width="1.7">
<path d="M936 167 V164.6 C936 163.6 936.8 162.8 937.8 162.8 H944.4 C945.4 162.8 946.2 163.6 946.2 164.6 V167"/>
<path d="M935.2 175.4 H934.5 C933.4 175.4 932.7 174.6 932.7 173.5 V169.3 C932.7 168 933.6 167.2 934.8 167.2 H947.6 C948.8 167.2 949.7 168 949.7 169.3 V173.5 C949.7 174.6 949 175.4 947.9 175.4 H947.2"/>
<path d="M935.5 173.6 H946.8 V180.2 H935.5 Z"/>
</g>
<path d="M939.3 176.3 H943.2 M939.3 178.3 H943.2" stroke="#111" stroke-width="1"/>
<path d="M934.6 169.6 H936.4" stroke="#555" stroke-width="0.9"/>
<g fill="none" stroke="#111" stroke-linecap="round" stroke-linejoin="round" stroke-width="1.75">
<path d="M983.2 162.9 H994.8 L998.3 166.4 V178 C998.3 179.3 997.5 180.1 996.2 180.1 H983.3 C982 180.1 981.3 179.3 981.3 178 V165 C981.3 163.7 982 162.9 983.2 162.9 Z"/>
<path d="M984.4 163.2 V168.3 H993.3"/>
<path d="M984.6 179.8 V172.4 H995 V179.8"/>
</g>
<path d="M1038.6 168.6 C1037.2 165.6 1035.6 164.4 1033.6 164.4 C1031.2 164.4 1029.6 166.4 1029.6 168.7 C1029.6 170.8 1030.6 172.2 1032 173.6 L1038.6 180 L1045.2 173.6 C1046.6 172.2 1047.7 170.8 1047.7 168.7 C1047.7 166.4 1046 164.4 1043.6 164.4 C1041.6 164.4 1040 165.6 1038.6 168.6 Z" fill="none" stroke="#111" stroke-linecap="round" stroke-linejoin="round" stroke-width="1.5"/>
<g fill="none" stroke="#111" stroke-linecap="round" stroke-linejoin="round" stroke-width="1.8">
<path d="M1078.3 169.8 V176 C1078.3 176.8 1078.8 177.4 1079.6 177.4 H1093.6 C1094.4 177.4 1094.9 176.8 1094.9 176 V169.8"/>
<path d="M1086.5 173 V163.8 M1083.3 166.9 L1086.5 163.6 L1089.7 166.9"/>
</g>
<path d="M1107.6 166.8 L1112.5 171.5 L1117.4 166.8" fill="none" stroke="#111" stroke-linecap="round" stroke-linejoin="round" stroke-width="1.65"/>
<g fill="none" stroke="#111" stroke-linecap="round" stroke-linejoin="round" stroke-width="1.6">
<circle cx="1148.6" cy="171.6" r="8.2"/>
<path d="M1144.6 171.5 H1152.4 M1148.5 167.8 V175.5"/>
<circle cx="1191.2" cy="171.6" r="8.2"/>
<path d="M1187.2 171.5 H1195.1"/>
</g>
</svg>
<!-- scrollbar -->
<svg class="abs" style="left:1888px;top:197px" width="30" height="675" viewBox="0 0 30 675">
<path d="M6.3 19.6 L14.6 8.5 L22.9 19.6 Z" fill="#8a8a8a" stroke="#8a8a8a" stroke-width="2" stroke-linejoin="round"/>
<rect x="6.3" y="34" width="16.2" height="318" rx="8.1" fill="#8e8e8e"/>
<path d="M6.3 654.5 L14.6 665.6 L22.9 654.5 Z" fill="#8a8a8a" stroke="#8a8a8a" stroke-width="2" stroke-linejoin="round"/>
<rect x="28" y="0" width="1.5" height="675" fill="#6a6a6a"/>
</svg>
<div id="page" class="abs"></div>
<div id="report">
<div class="rep" style="left:532px;width:892px;text-align:center;font-family:'Liberation Mono',monospace;font-size:18px;color:#222;top:256.6px;transform:scaleY(0.87);transform-origin:50% 13.6px">PT. Mitra Spesialis</div>
<div class="rep" style="left:532px;width:892px;text-align:center;font-size:27px;font-weight:bold;color:#8a0c3a;top:282.1px">Daftar Faktur Penjualan</div>
<div class="rep" style="left:532px;width:892px;text-align:center;font-family:'Liberation Mono',monospace;font-size:16.6px;color:#222;top:318.2px;transform:scaleY(0.93);transform-origin:50% 11.8px">Dari 10 Feb 2026 s/d 02 Mar 2026</div>
<div class="rep" style="right:537px;font-size:10.6px;font-style:italic;color:#222;top:340.8px">Cabang : [Semua Cabang]</div>
<div class="abs" style="left:1184px;top:372px;width:170px;height:288px;border:8px solid #e3191f"></div>
<div class="hd" style="left:614px;top:389.4px">Nomor #</div>
<div class="hd" style="left:829px;top:389.4px">Tanggal</div>
<div class="hd" style="left:951px;top:389.4px">Pelanggan</div>
<div class="hd" style="right:595px;top:389.4px">Total</div>
<div class="ul" style="left:606px;width:201px"></div>
<div class="ul" style="left:820px;width:111px"></div>
<div class="ul" style="left:943px;width:239px"></div>
<div class="ul" style="left:1195px;width:136px"></div>
<div class="row" style="left:614px;top:418.5px">POS/260215/00004</div>
<div class="row" style="left:828.6px;top:418.5px">15 Feb 2026</div>
<div class="row" style="left:951.5px;top:418.5px">Pelanggan Umum</div>
<div class="row" style="right:594.8px;top:418.5px">300.000</div>
<div class="row" style="left:614px;top:439.4px">SI.2026.02.00012</div>
<div class="row" style="left:828.6px;top:439.4px">10 Feb 2026</div>
<div class="row" style="left:951.5px;top:439.4px">Niswa</div>
<div class="row" style="right:594.8px;top:439.4px">3.000.000</div>
<div class="row" style="left:614px;top:460.4px">SI.2026.02.00013</div>
<div class="row" style="left:828.6px;top:460.4px">10 Feb 2026</div>
<div class="row" style="left:951.5px;top:460.4px">Wira</div>
<div class="row" style="right:594.8px;top:460.4px">9.000.000</div>
<div class="row" style="left:614px;top:480.8px">SI.2026.02.00015</div>
<div class="row" style="left:828.6px;top:480.8px">16 Feb 2026</div>
<div class="row" style="left:951.5px;top:480.8px">Bpk Egi Gunawan</div>
<div class="row" style="right:594.8px;top:480.8px">1.760.000</div>
<div class="row" style="left:614px;top:501.7px">SI.2026.02.00016</div>
<div class="row" style="left:828.6px;top:501.7px">21 Feb 2026</div>
<div class="row" style="left:951.5px;top:501.7px">Bpk Egi Gunawan</div>
<div class="row" style="right:594.8px;top:501.7px">2.400.000</div>
<div class="row" style="left:614px;top:523.3px">SI.2026.02.00017</div>
<div class="row" style="left:828.6px;top:523.3px">21 Feb 2026</div>
<div class="row" style="left:951.5px;top:523.3px">Bpk Nusa</div>
<div class="row" style="right:594.8px;top:523.3px">2.700.000</div>
<div class="row" style="left:614px;top:544.4px">SI.2026.02.00018</div>
<div class="row" style="left:828.6px;top:544.4px">21 Feb 2026</div>
<div class="row" style="left:951.5px;top:544.4px">Annisa (VA BCA)</div>
<div class="row" style="right:594.8px;top:544.4px">333.000</div>
<div class="row" style="left:614px;top:565.6px">SI.2026.02.00019</div>
<div class="row" style="left:828.6px;top:565.6px">23 Feb 2026</div>
<div class="row" style="left:951.5px;top:565.6px">Niswa</div>
<div class="row" style="right:594.8px;top:565.6px">323.000</div>
<div class="row" style="left:614px;top:585.5px">SI.2026.02.00024</div>
<div class="row" style="left:828.6px;top:585.5px">12 Feb 2026</div>
<div class="row" style="left:951.5px;top:585.5px">Alya</div>
<div class="row" style="right:594.8px;top:585.5px">211.000</div>
<div class="row" style="left:614px;top:606.4px">SI.2026.02.00026</div>
<div class="row" style="left:828.6px;top:606.4px">25 Feb 2026</div>
<div class="row" style="left:951.5px;top:606.4px">Niswa</div>
<div class="row" style="right:594.8px;top:606.4px">323.000</div>
<div class="row" style="left:614px;top:628.3px">SI.2026.03.00001</div>
<div class="row" style="left:828.6px;top:628.3px">02 Mar 2026</div>
<div class="row" style="left:951.5px;top:628.3px">Bpk Rona</div>
<div class="row" style="right:594.8px;top:628.3px">350.000</div>
</div>
</body></html>
